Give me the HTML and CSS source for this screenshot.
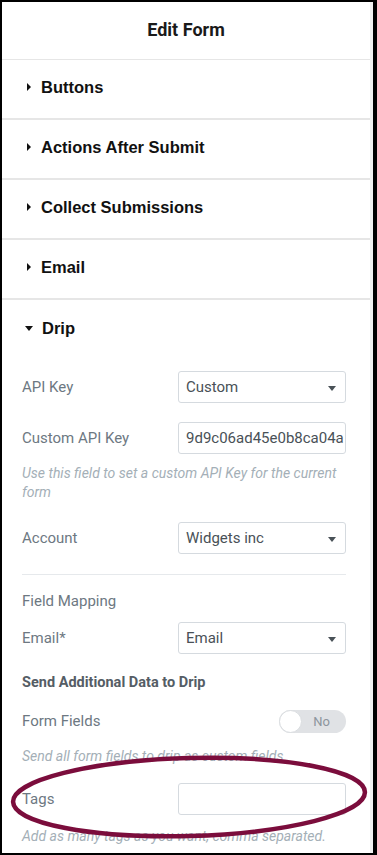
FILE: index.html
```html
<!DOCTYPE html>
<html lang="en">
<head>
    <meta charset="UTF-8">
    <meta name="viewport" content="width=device-width, initial-scale=1.0">
    <title>Edit Form</title>
    <link rel="stylesheet" href="styles.css">
</head>
<body>
    <div class="frame">
        <div class="panel">
            <div class="panel-header">Edit Form</div>

            <div class="section"><span class="caret"></span>Buttons</div>
            <div class="section"><span class="caret"></span>Actions After Submit</div>
            <div class="section"><span class="caret"></span>Collect Submissions</div>
            <div class="section"><span class="caret"></span>Email</div>
            <div class="section open"><span class="caret"></span>Drip</div>

            <!-- drip settings -->
            <div class="section-body">
                <div class="control first">
                    <label>API Key</label>
                    <div class="select">Custom<span class="arrow"></span></div>
                </div>
                <div class="control gap-19">
                    <label>Custom API Key</label>
                    <div class="input">9d9c06ad45e0b8ca04a</div>
                </div>
                <p class="help">Use this field to set a custom API Key for the current form</p>
                <div class="control gap-20">
                    <label>Account</label>
                    <div class="select">Widgets inc<span class="arrow"></span></div>
                </div>
                <hr class="divider">
                <div class="heading">Field Mapping</div>
                <div class="control gap-11">
                    <label>Email*</label>
                    <div class="select">Email<span class="arrow"></span></div>
                </div>
                <div class="heading bold">Send Additional Data to Drip</div>
                <div class="control gap-12">
                    <label>Form Fields</label>
                    <div class="switch-wrap">
                        <div class="switch"><span class="knob"></span><span class="switch-text">No</span></div>
                    </div>
                </div>
                <p class="help one">Send all form fields to drip as custom fields</p>
                <div class="control gap-17">
                    <label>Tags</label>
                    <div class="input"></div>
                </div>
                <p class="help last">Add as many tags as you want, comma separated.</p>
            </div>

            <!-- highlight -->
            <svg class="highlight" width="377" height="100" viewBox="0 0 377 100">
                <ellipse cx="189" cy="48" rx="176" ry="39" transform="rotate(-1.6 189 48)"
                         fill="none" stroke="#7b0d3c" stroke-width="4.5"/>
            </svg>
        </div>
    </div>
</body>
</html>
```

FILE: styles.css
```css
body {
    margin: 0;
    padding: 0;
    background-color: #000;
}
.frame {
    width: 377px;
    height: 855px;
    box-sizing: border-box;
    padding: 2px 4px 2px 2px;
}
.panel {
    position: relative;
    height: 851px;
    background-color: #fff;
    border-right: 3px solid #f1f1f1;
    overflow: hidden;
    font-family: Roboto, 'Liberation Sans', sans-serif;
}
.panel-header {
    height: 57px;
    line-height: 56px;
    text-align: center;
    font-size: 18px;
    font-weight: bold;
    color: #1a1a1a;
    border-bottom: 1px solid #e6e6e6;
}
.section {
    height: 54px;
    display: flex;
    align-items: center;
    padding-left: 23px;
    padding-bottom: 4px;
    font-family: 'Liberation Sans', Arial, sans-serif;
    font-size: 16.5px;
    font-weight: bold;
    color: #111;
    border-bottom: 2px solid #e6e6e6;
}
.section.open {
    border-bottom: none;
    height: 56px;
}
.caret {
    width: 0;
    height: 0;
    border-top: 4px solid transparent;
    border-bottom: 4px solid transparent;
    border-left: 4px solid #111;
    margin-right: 10px;
    margin-left: 2px;
}
.open .caret {
    border-left: 4px solid transparent;
    border-right: 4px solid transparent;
    border-top: 5px solid #111;
    border-bottom: none;
    margin-left: 0;
    margin-right: 9px;
}
.section-body {
    padding: 0 24px 0 20px;
}
.control {
    display: flex;
    align-items: center;
    justify-content: space-between;
    height: 32px;
}
.control.first { margin-top: 11px; }
.gap-19 { margin-top: 19px; }
.gap-20 { margin-top: 20px; }
.gap-11 { margin-top: 11px; }
.gap-12 { margin-top: 12px; }
.gap-17 { margin-top: 17px; }
.control label {
    font-size: 15px;
    color: #6d7882;
}
.select, .input {
    position: relative;
    width: 168px;
    height: 32px;
    box-sizing: border-box;
    border: 1px solid #d5dadf;
    border-radius: 3px;
    padding: 0 7px;
    font-size: 15px;
    line-height: 30px;
    color: #495157;
    white-space: nowrap;
    overflow: hidden;
}
.arrow {
    position: absolute;
    right: 9px;
    top: 14px;
    width: 0;
    height: 0;
    border-left: 4px solid transparent;
    border-right: 4px solid transparent;
    border-top: 5px solid #495157;
}
.help {
    margin: 10px 0 0;
    font-size: 14px;
    line-height: 19px;
    font-style: italic;
    color: #a4afb7;
}
.help.one {
    margin-top: 10px;
}
.help.last {
    margin-top: 12px;
}
.divider {
    border: none;
    border-top: 1px solid #e6e9ec;
    margin: 20px 0 0;
}
.heading {
    margin-top: 16px;
    font-size: 15px;
    line-height: 20px;
    color: #6d7882;
}
.heading.bold {
    margin-top: 19px;
    font-size: 14.5px;
    font-weight: bold;
    color: #555d65;
}
.switch-wrap {
    width: 168px;
    display: flex;
    justify-content: flex-end;
}
.switch {
    position: relative;
    width: 67px;
    height: 23px;
    border-radius: 12px;
    background-color: #e0e2e5;
    display: flex;
    align-items: center;
    justify-content: flex-end;
}
.knob {
    position: absolute;
    left: 0;
    top: 0;
    width: 21px;
    height: 21px;
    border-radius: 50%;
    background-color: #fff;
    border: 1px solid #dadde0;
}
.switch-text {
    font-size: 13px;
    color: #8d959d;
    margin-right: 16px;
}
.highlight {
    position: absolute;
    left: -2px;
    top: 747px;
    pointer-events: none;
}
```
